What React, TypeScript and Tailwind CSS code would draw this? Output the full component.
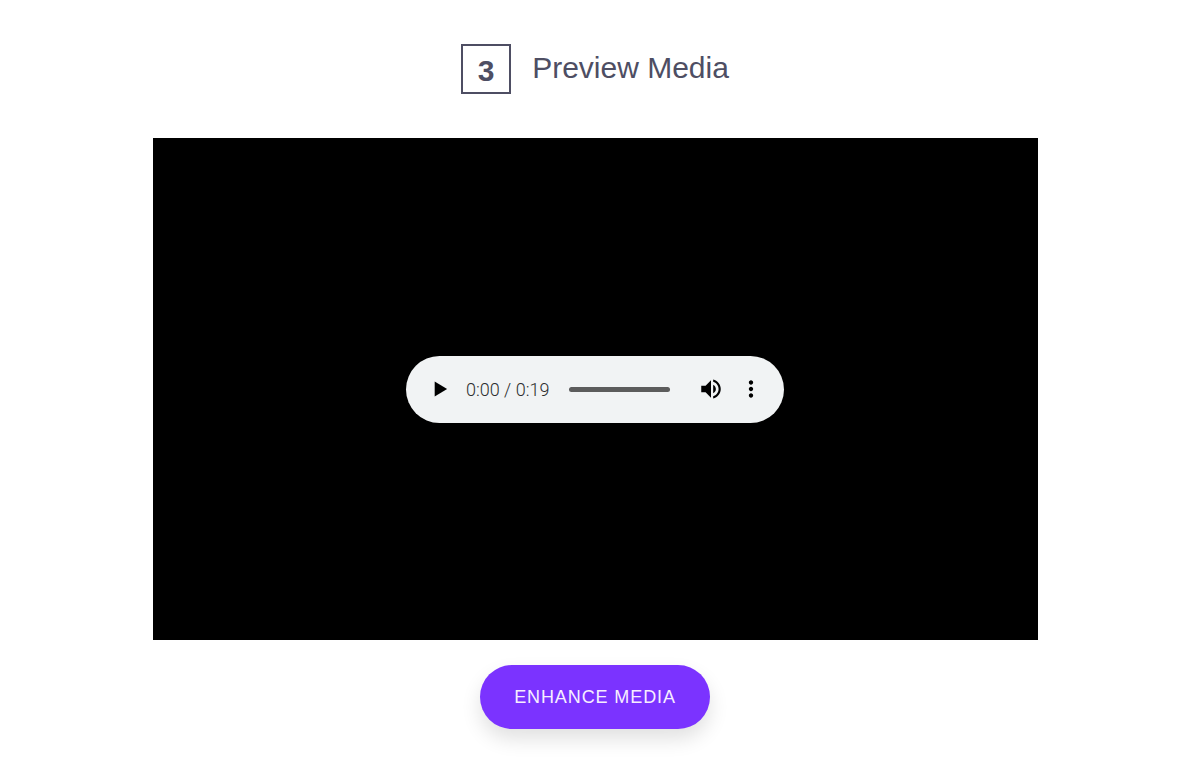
import React, { useState } from "react";

function formatTime(seconds: number) {
  const m = Math.floor(seconds / 60);
  const s = Math.floor(seconds % 60);
  return `${m}:${String(s).padStart(2, "0")}`;
}

type IconButtonProps = {
  label: string;
  path: string;
  onClick?: () => void;
};

function IconButton({ label, path, onClick }: IconButtonProps) {
  return (
    <button type="button" aria-label={label} onClick={onClick} className="shrink-0 text-black">
      <svg viewBox="0 0 24 24" className="block size-[26px]" fill="currentColor" aria-hidden="true">
        <path d={path} />
      </svg>
    </button>
  );
}

const PLAY = "M8 5v14l11.5-7z";
const PAUSE = "M6 19h4V5H6v14zm8-14v14h4V5h-4z";
const VOLUME =
  "M3 9v6h4l5 5V4L7 9H3zm13.5 3c0-1.77-1.02-3.29-2.5-4.03v8.05c1.48-.73 2.5-2.25 2.5-4.02zM14 3.23v2.06c2.89.86 5 3.54 5 6.71s-2.11 5.85-5 6.71v2.06c4.01-.91 7-4.49 7-8.77s-2.99-7.86-7-8.77z";
const MUTED = "M3 9v6h4l5 5V4L7 9H3z";
const MORE =
  "M12 8c1.1 0 2-.9 2-2s-.9-2-2-2-2 .9-2 2 .9 2 2 2zm0 2c-1.1 0-2 .9-2 2s.9 2 2 2 2-.9 2-2-.9-2-2-2zm0 6c-1.1 0-2 .9-2 2s.9 2 2 2 2-.9 2-2-.9-2-2-2z";

function AudioPlayer({ duration }: { duration: number }) {
  const [playing, setPlaying] = useState(false);
  const [muted, setMuted] = useState(false);
  const [position, setPosition] = useState(0);

  return (
    <div className="flex w-full max-w-[378px] items-center rounded-full bg-[#f1f3f4] px-5 py-5">
      <IconButton
        label={playing ? "Pause" : "Play"}
        path={playing ? PAUSE : PLAY}
        onClick={() => setPlaying(!playing)}
      />
      <span className="ml-3.5 whitespace-nowrap font-['Roboto',sans-serif] text-lg leading-[27px] font-light text-[#2c2d2e]">
        {formatTime(position)} / {formatTime(duration)}
      </span>
      <input
        type="range"
        aria-label="Seek"
        min={0}
        max={duration}
        value={position}
        onChange={(e) => setPosition(Number(e.target.value))}
        className="mr-7 ml-5 h-[5px] min-w-0 flex-1 cursor-pointer appearance-none rounded-full bg-[#5c5c5c] [&::-webkit-slider-thumb]:size-0 [&::-webkit-slider-thumb]:appearance-none"
      />
      <IconButton
        label={muted ? "Unmute" : "Mute"}
        path={muted ? MUTED : VOLUME}
        onClick={() => setMuted(!muted)}
      />
      <div className="ml-3.5 flex">
        <IconButton label="More options" path={MORE} />
      </div>
    </div>
  );
}

export default function App() {
  return (
    <main className="flex flex-col items-center bg-white pt-11 pr-4 pb-11 pl-[22px] font-['Liberation_Sans',Arial,sans-serif]">
      <header className="flex items-start gap-[21px] text-3xl text-[#4e4e63]">
        <span className="flex size-[50px] items-center justify-center border-2 border-[#4e4e63] pt-1 font-bold">
          3
        </span>
        <h2 className="pt-1.5">Preview Media</h2>
      </header>

      <section
        aria-label="Media preview"
        className="mt-11 flex aspect-[885/502] w-full max-w-[885px] items-center justify-center bg-black"
      >
        <AudioPlayer duration={19} />
      </section>

      <button
        type="button"
        className="mt-[25px] rounded-full bg-[#7b33ff] px-[34px] py-[18px] text-lg tracking-wider text-[#f6eeff] uppercase shadow-[0_10px_20px_rgba(0,0,0,0.12)]"
      >
        Enhance Media
      </button>
    </main>
  );
}
